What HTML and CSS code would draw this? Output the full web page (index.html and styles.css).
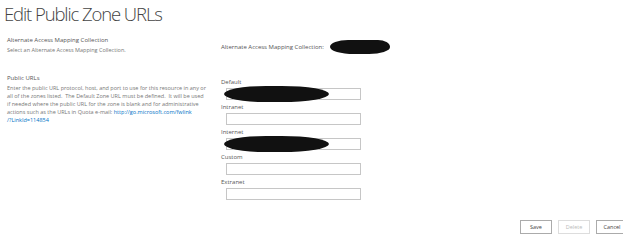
FILE: index.html
```html
<!DOCTYPE html>
<html lang="en">
<head>
    <meta charset="UTF-8">
    <title>Edit Public Zone URLs</title>
    <link rel="stylesheet" href="styles.css">
</head>
<body>

    <h1 class="titlu">Edit Public Zone URLs</h1>

    <div class="formular">
        <div class="sectiune">
            <div class="descriere">
                <div class="nume">Alternate Access Mapping Collection</div>
                <div class="text">Select an Alternate Access Mapping Collection.</div>
            </div>
            <div class="camp colectie">
                <span>Alternate Access Mapping Collection:</span>
                <span class="ascuns mic"></span>
            </div>
        </div>

        <div class="sectiune">
            <div class="descriere">
                <div class="nume">Public URLs</div>
                <div class="text">Enter the public URL protocol, host, and port to use for this resource in any or<br>
                    all of the zones listed.&nbsp; The Default Zone URL must be defined.&nbsp; It will be used<br>
                    if needed where the public URL for the zone is blank and for administrative<br>
                    actions such as the URLs in Quota e-mail: <a href="#">http://go.microsoft.com/fwlink<br>/?LinkId=114854</a></div>
            </div>
            <div class="camp zone">
                <div class="zona">
                    <label>Default</label>
                    <div class="cutie"><span class="ascuns"></span></div>
                </div>
                <div class="zona">
                    <label>Intranet</label>
                    <div class="cutie"></div>
                </div>
                <div class="zona">
                    <label>Internet</label>
                    <div class="cutie"><span class="ascuns"></span></div>
                </div>
                <div class="zona">
                    <label>Custom</label>
                    <div class="cutie"></div>
                </div>
                <div class="zona">
                    <label>Extranet</label>
                    <div class="cutie"></div>
                </div>
            </div>
        </div>
    </div>

    <div class="butoane">
        <div class="buton">Save</div>
        <div class="buton inactiv">Delete</div>
        <div class="buton">Cancel</div>
    </div>

</body>
</html>
```

FILE: styles.css
```css
body {
    margin: 0;
    width: 623px;
    height: 238px;
    overflow: hidden;
    background-color: white;
    font-family: "Open Sans", "Noto Sans", sans-serif;
    color: #444;
    position: relative;
}

.titlu {
    margin: 0;
    padding: 1px 0 0 4px;
    font-size: 18.5px;
    font-weight: 300;
    letter-spacing: -1.1px;
    line-height: 25px;
    color: #444;
}

.formular {
    padding-left: 7px;
}

.sectiune {
    display: flex;
}

.descriere {
    width: 214px;
    flex-shrink: 0;
}

.nume {
    font-size: 6px;
    line-height: 8px;
    color: #555;
}

.text {
    font-size: 5.5px;
    line-height: 8px;
    color: #777;
    padding-top: 2px;
    white-space: nowrap;
}

.text a {
    color: #0072c6;
    text-decoration: none;
}

.sectiune:first-child .nume {
    margin-top: 10px;
}

.sectiune:last-child {
    margin-top: 20px;
}

.camp {
    font-size: 6px;
    line-height: 8px;
    color: #555;
}

.colectie {
    display: flex;
    align-items: center;
    margin-top: 14px;
    gap: 6px;
}

.zone {
    margin-top: 4px;
    display: flex;
    flex-direction: column;
    gap: 3px;
}

.zona label {
    display: block;
}

.cutie {
    position: relative;
    margin-left: 5px;
    margin-top: 2px;
    width: 133px;
    height: 10px;
    border: 1px solid #c6c6c6;
}

.ascuns {
    position: absolute;
    left: -3px;
    top: -3px;
    width: 105px;
    height: 16px;
    background-color: #111;
    border-radius: 40% 45% 45% 40% / 50%;
}

.ascuns.mic {
    position: static;
    display: block;
    width: 60px;
    height: 14px;
    border-radius: 30% 20% 35% 40% / 50%;
}

.butoane {
    position: absolute;
    right: -5px;
    bottom: 4px;
    display: flex;
    gap: 6px;
}

.buton {
    width: 30px;
    height: 12px;
    border: 1px solid #ababab;
    font-size: 5.5px;
    line-height: 12px;
    text-align: center;
    color: #444;
}

.buton.inactiv {
    color: #bbb;
    border-color: #ddd;
}
```
